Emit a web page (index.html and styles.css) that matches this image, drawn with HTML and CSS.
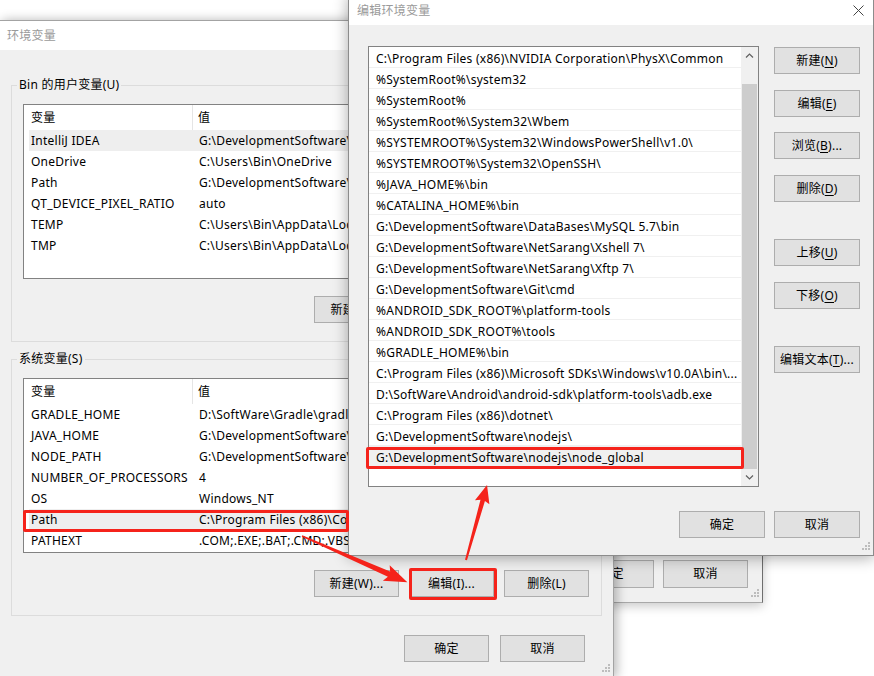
FILE: index.html
```html
<!DOCTYPE html>
<html lang="zh-CN">
<head>
<meta charset="utf-8">
<title>编辑环境变量</title>
<link rel="stylesheet" href="styles.css">
</head>
<body>
<div class="desktop">

  <section class="win win-sys">
    <header class="titlebar">系统属性</header>
    <div class="sys-actions">
      <button class="btn">确定</button>
      <button class="btn">取消</button>
    </div>
    <svg class="grip" width="10" height="10" viewBox="0 0 10 10"><rect x="8" y="0" width="2" height="2"/><rect x="5" y="3" width="2" height="2"/><rect x="8" y="3" width="2" height="2"/><rect x="2" y="6" width="2" height="2"/><rect x="5" y="6" width="2" height="2"/><rect x="8" y="6" width="2" height="2"/></svg>
  </section>

  <section class="win win-env">
    <header class="titlebar">环境变量</header>
    <div class="env-body">
      <fieldset class="group">
        <legend>Bin 的用户变量(U)</legend>
        <div class="lv">
          <div class="lv-head"><span class="c1">变量</span><span class="c2">值</span></div>
          <div class="lv-row sel"><span class="c1">IntelliJ IDEA</span><span class="c2">G:\DevelopmentSoftware\IntelliJ IDEA\bin;</span></div>
          <div class="lv-row"><span class="c1">OneDrive</span><span class="c2">C:\Users\Bin\OneDrive</span></div>
          <div class="lv-row"><span class="c1">Path</span><span class="c2">G:\DevelopmentSoftware\nodejs\node_global</span></div>
          <div class="lv-row"><span class="c1">QT_DEVICE_PIXEL_RATIO</span><span class="c2">auto</span></div>
          <div class="lv-row"><span class="c1">TEMP</span><span class="c2">C:\Users\Bin\AppData\Local\Temp</span></div>
          <div class="lv-row"><span class="c1">TMP</span><span class="c2">C:\Users\Bin\AppData\Local\Temp</span></div>
        </div>
        <div class="group-actions">
          <button class="btn">新建(N)...</button>
          <button class="btn">编辑(E)...</button>
          <button class="btn">删除(D)</button>
        </div>
      </fieldset>

      <fieldset class="group group-sys">
        <legend>系统变量(S)</legend>
        <div class="lv">
          <div class="lv-head"><span class="c1">变量</span><span class="c2">值</span></div>
          <div class="lv-row"><span class="c1">GRADLE_HOME</span><span class="c2">D:\SoftWare\Gradle\gradle-6.8</span></div>
          <div class="lv-row"><span class="c1">JAVA_HOME</span><span class="c2">G:\DevelopmentSoftware\Java\jdk1.8</span></div>
          <div class="lv-row"><span class="c1">NODE_PATH</span><span class="c2">G:\DevelopmentSoftware\nodejs\node_modules</span></div>
          <div class="lv-row"><span class="c1">NUMBER_OF_PROCESSORS</span><span class="c2">4</span></div>
          <div class="lv-row"><span class="c1">OS</span><span class="c2">Windows_NT</span></div>
          <div class="lv-row sel"><span class="c1">Path</span><span class="c2">C:\Program Files (x86)\Common Files\Oracle\Java\javapath;</span></div>
          <div class="lv-row"><span class="c1">PATHEXT</span><span class="c2">.COM;.EXE;.BAT;.CMD;.VBS;.VBE;.JS;.JSE;.WSF;.WSH;.MSC</span></div>
        </div>
        <div class="group-actions">
          <button class="btn">新建(W)...</button>
          <button class="btn">编辑(I)...</button>
          <button class="btn">删除(L)</button>
        </div>
      </fieldset>

      <div class="env-actions">
        <button class="btn">确定</button>
        <button class="btn">取消</button>
      </div>
    </div>
    <svg class="grip" width="10" height="10" viewBox="0 0 10 10"><rect x="8" y="0" width="2" height="2"/><rect x="5" y="3" width="2" height="2"/><rect x="8" y="3" width="2" height="2"/><rect x="2" y="6" width="2" height="2"/><rect x="5" y="6" width="2" height="2"/><rect x="8" y="6" width="2" height="2"/></svg>
  </section>

  <section class="win win-edit">
    <header class="titlebar edit-title">
      <span>编辑环境变量</span>
      <svg class="close" width="11" height="11" viewBox="0 0 11 11"><path d="M0.5 0.5 L10.5 10.5 M10.5 0.5 L0.5 10.5" stroke="#444" stroke-width="1" fill="none"/></svg>
    </header>
    <div class="edit-body">
      <div class="listbox">
        <ul class="items">
          <li>C:\Program Files (x86)\NVIDIA Corporation\PhysX\Common</li>
          <li>%SystemRoot%\system32</li>
          <li>%SystemRoot%</li>
          <li>%SystemRoot%\System32\Wbem</li>
          <li>%SYSTEMROOT%\System32\WindowsPowerShell\v1.0\</li>
          <li>%SYSTEMROOT%\System32\OpenSSH\</li>
          <li>%JAVA_HOME%\bin</li>
          <li>%CATALINA_HOME%\bin</li>
          <li>G:\DevelopmentSoftware\DataBases\MySQL 5.7\bin</li>
          <li>G:\DevelopmentSoftware\NetSarang\Xshell 7\</li>
          <li>G:\DevelopmentSoftware\NetSarang\Xftp 7\</li>
          <li>G:\DevelopmentSoftware\Git\cmd</li>
          <li>%ANDROID_SDK_ROOT%\platform-tools</li>
          <li>%ANDROID_SDK_ROOT%\tools</li>
          <li>%GRADLE_HOME%\bin</li>
          <li>C:\Program Files (x86)\Microsoft SDKs\Windows\v10.0A\bin\...</li>
          <li>D:\SoftWare\Android\android-sdk\platform-tools\adb.exe</li>
          <li>C:\Program Files (x86)\dotnet\</li>
          <li>G:\DevelopmentSoftware\nodejs\</li>
          <li class="sel">G:\DevelopmentSoftware\nodejs\node_global</li>
        </ul>
        <div class="vscroll">
          <div class="sb-btn"><svg width="9" height="5" viewBox="0 0 9 5"><path d="M1 4.5 L4.5 1 L8 4.5" fill="none" stroke="#606060" stroke-width="1.2"/></svg></div>
          <div class="sb-track"><div class="sb-thumb"></div></div>
          <div class="sb-btn"><svg width="9" height="5" viewBox="0 0 9 5"><path d="M1 0.5 L4.5 4 L8 0.5" fill="none" stroke="#606060" stroke-width="1.2"/></svg></div>
        </div>
      </div>
      <div class="side">
        <button class="btn">新建(<u>N</u>)</button>
        <button class="btn">编辑(<u>E</u>)</button>
        <button class="btn">浏览(<u>B</u>)...</button>
        <button class="btn">删除(<u>D</u>)</button>
        <button class="btn sep">上移(<u>U</u>)</button>
        <button class="btn">下移(<u>O</u>)</button>
        <button class="btn sep">编辑文本(<u>T</u>)...</button>
      </div>
      <div class="edit-actions">
        <button class="btn">确定</button>
        <button class="btn">取消</button>
      </div>
    </div>
    <svg class="grip" width="10" height="10" viewBox="0 0 10 10"><rect x="8" y="0" width="2" height="2"/><rect x="5" y="3" width="2" height="2"/><rect x="8" y="3" width="2" height="2"/><rect x="2" y="6" width="2" height="2"/><rect x="5" y="6" width="2" height="2"/><rect x="8" y="6" width="2" height="2"/></svg>
  </section>

  <div class="mark mark-path"></div>
  <div class="mark mark-edit"></div>
  <div class="mark mark-node"></div>

  <svg class="arrows" width="874" height="676" viewBox="0 0 874 676">
    <g transform="translate(302 536) rotate(23.66)">
      <polygon points="0,-0.7 95,-2.8 92,-8.5 115,0 92,8.5 95,2.8 0,0.7"/>
    </g>
    <g transform="translate(466 560) rotate(-74.36)">
      <polygon points="0,-1 62,-2.3 60,-7.5 78,0 60,7.5 62,2.3 0,1"/>
    </g>
  </svg>
</div>
</body>
</html>
```

FILE: styles.css
```css
* { box-sizing: border-box; }

html, body {
  margin: 0;
  padding: 0;
}

body {
  width: 874px;
  height: 676px;
  overflow: hidden;
  background: #ffffff;
  font-family: "Noto Sans", "Noto Sans CJK SC", sans-serif;
  font-size: 12px;
  letter-spacing: 0.25px;
  color: #000;
}

.desktop {
  position: relative;
  width: 874px;
  height: 676px;
  overflow: hidden;
}

/* ---------- generic window parts ---------- */
.win {
  position: absolute;
  background: #f0f0f0;
}

.titlebar {
  background: #fff;
  color: #9a9a9a;
  white-space: nowrap;
}

.btn {
  width: 85px;
  height: 27px;
  padding: 0;
  background: #e1e1e1;
  border: 1px solid #adadad;
  font: inherit;
  letter-spacing: inherit;
  color: #000;
  line-height: 25px;
  text-align: center;
  white-space: nowrap;
}

.btn u { text-decoration: underline; text-underline-offset: 2px; }

.grip {
  position: absolute;
  right: 3px;
  bottom: 3px;
  fill: #bdbdbd;
}

/* ---------- background window (system properties) ---------- */
.win-sys {
  left: 300px;
  top: 80px;
  width: 463px;
  height: 523px;
  border-right: 1px solid #6e6e6e;
  border-bottom: 1px solid #a8a8a8;
  box-shadow: 0 3px 10px rgba(0, 0, 0, 0.22);
  display: flex;
  flex-direction: column;
  justify-content: space-between;
}

.win-sys .titlebar {
  height: 30px;
  line-height: 30px;
  padding-left: 8px;
}

.sys-actions {
  display: flex;
  justify-content: flex-end;
  gap: 9px;
  padding: 0 14px 14px 0;
}

.sys-actions .btn { height: 28px; line-height: 26px; }

/* ---------- 环境变量 window ---------- */
.win-env {
  left: -1px;
  top: 20px;
  width: 615px;
  height: 658px;
  border: 1px solid #a3a3a3;
  box-shadow: 3px 0 10px rgba(0, 0, 0, 0.28);
}

.win-env .titlebar {
  height: 29px;
  line-height: 29px;
  padding-left: 7px;
}

.env-body {
  padding: 27px 0 0 11px;
}

.group {
  width: 591px;
  margin: 0;
  border: 1px solid #dcdcdc;
  padding: 11px 12px 18px 11px;
  min-width: 0;
}

.group legend {
  padding: 0 2px;
  margin-left: -6px;
  line-height: 16px;
}

.group-sys { margin-top: 9px; }

.lv {
  height: 175px;
  border: 1px solid #828282;
  background: #fff;
  overflow: hidden;
}

.lv-head {
  display: flex;
  height: 25px;
  line-height: 25px;
}

.lv-head .c1 {
  width: 169px;
  padding-left: 7px;
  border-right: 1px solid #e5e5e5;
}

.lv-head .c2 { padding-left: 5px; }

.lv-row {
  display: flex;
  height: 21px;
  line-height: 21px;
  margin-left: 5px;
  white-space: nowrap;
}

.lv-row .c1 {
  flex: none;
  width: 164px;
  padding-left: 2px;
}

.lv-row .c2 { padding-left: 6px; }

.lv-row.sel { background: #eeeeee; }

.group-actions {
  display: flex;
  justify-content: flex-end;
  gap: 10px;
  margin-top: 17px;
}

.env-actions {
  display: flex;
  justify-content: flex-end;
  gap: 11px;
  margin-top: 19px;
  padding-right: 28px;
  width: 602px;
}

/* ---------- 编辑环境变量 dialog ---------- */
.win-edit {
  left: 348px;
  top: -6px;
  width: 526px;
  height: 562px;
  border: 1px solid #8c8c8c;
  box-shadow: 0 2px 14px rgba(0, 0, 0, 0.33);
}

.edit-title {
  height: 30px;
  display: flex;
  align-items: center;
  justify-content: space-between;
  padding: 0 9px 0 8px;
}

.edit-body {
  display: grid;
  grid-template-columns: 391px 86px;
  column-gap: 15px;
  padding: 21px 13px 0 19px;
}

.listbox {
  display: flex;
  height: 441px;
  border: 1px solid #828282;
  background: #fff;
}

.items {
  flex: 1;
  min-width: 0;
  list-style: none;
  margin: 0;
  padding: 0;
}

.items li {
  height: 21px;
  line-height: 23px;
  padding: 0 4px 0 7px;
  border-bottom: 1px solid #f0f0f0;
  white-space: nowrap;
  overflow: hidden;
}

.items li.sel { background: #f0f0f0; }

.vscroll {
  width: 17px;
  flex: none;
  display: flex;
  flex-direction: column;
  background: #f0f0f0;
}

.sb-btn {
  height: 17px;
  display: flex;
  align-items: center;
  justify-content: center;
}

.sb-track {
  flex: 1;
  padding: 20px 1px 0;
}

.sb-thumb {
  height: 385px;
  background: #cdcdcd;
}

.side {
  display: flex;
  flex-direction: column;
  gap: 15.67px;
  padding-top: 1px;
}

.side .btn { width: 86px; }
.side .sep { margin-top: 21.33px; }

.edit-actions {
  grid-column: 1 / 3;
  display: flex;
  justify-content: flex-end;
  gap: 9px;
  margin-top: 24px;
}

.edit-actions .btn { width: 86px; }

/* ---------- annotations ---------- */
.mark {
  position: absolute;
  border: 3px solid #f5231b;
  border-radius: 2px;
}

.mark-path { left: 23px; top: 510px; width: 326px; height: 22px; }
.mark-edit { left: 409px; top: 568px; width: 88px; height: 32px; }
.mark-node { left: 366px; top: 447px; width: 378px; height: 22px; }

.arrows {
  position: absolute;
  left: 0;
  top: 0;
  fill: #f5231b;
  pointer-events: none;
}
```
